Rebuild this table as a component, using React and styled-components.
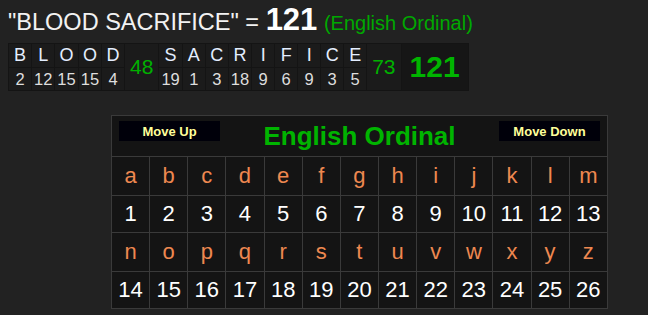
import React from 'react';
import styled, { createGlobalStyle } from 'styled-components';

const GlobalStyle = createGlobalStyle`
  html, body {
    margin: 0;
    background: #222222;
    font-family: "Liberation Sans", Arial, sans-serif;
  }
  body {
    padding: 8px;
  }
`;

const Headline = styled.div`
  font-size: 23.5px;
  line-height: 26px;
  color: #f2f2f2;
  white-space: nowrap;
  margin-top: -1px;
`;

const Total = styled.span`
  font-size: 31px;
  font-weight: bold;
  color: #ffffff;
`;

const Cipher = styled.span`
  font-size: 20px;
  color: #00a800;
`;

const Breakdown = styled.table`
  border-collapse: collapse;
  background: #141414;
  margin-top: 7px;
  border: 1px solid #161616;
`;

const LetterCell = styled.td`
  height: 23px;
  min-width: 18px;
  padding: 0 2px;
  text-align: center;
  font-size: 18px;
  color: #e4eeff;
  background: #1b1b1b;
  border: 1px solid #141414;
`;

const ValueCell = styled(LetterCell)`
  height: 22px;
  font-size: 16.5px;
  padding: 0 2px;
  color: #dedede;
`;

const WordSum = styled.td`
  padding: 0 5px;
  text-align: center;
  font-size: 21px;
  color: #00b000;
  background: #1b1b1b;
  border: 1px solid #141414;
`;

const GrandSum = styled.td`
  padding: 0 8px;
  text-align: center;
  font-size: 30px;
  font-weight: bold;
  color: #00b400;
  background: #161616;
  border: 1px solid #141414;
`;

const ChartWrap = styled.div`
  margin-top: 24px;
  padding-left: 103px;
`;

const Chart = styled.table`
  border-collapse: collapse;
  background: #141414;
  width: 497px;
  table-layout: fixed;
`;

const HeaderCell = styled.td`
  height: 40px;
  padding: 0 7px;
  border: 1px solid #3a3a3a;
  vertical-align: top;
`;

const HeaderBar = styled.div`
  display: flex;
  align-items: flex-start;
  justify-content: space-between;
  padding-top: 5px;
`;

const MoveButton = styled.button`
  width: 101px;
  height: 20px;
  padding: 0;
  border: 0;
  background: #00000a;
  color: #ffff99;
  font-family: "Liberation Sans", Arial, sans-serif;
  font-size: 13px;
  font-weight: bold;
`;

const Title = styled.div`
  font-size: 26px;
  font-weight: bold;
  color: #00b400;
  line-height: 30px;
`;

const ChartCell = styled.td`
  height: ${p => (p.$letter ? 38 : 36)}px;
  padding: 0;
  text-align: center;
  font-size: 22px;
  color: ${p => (p.$letter ? '#ee8850' : '#ffffff')};
  border: 1px solid #3a3a3a;
`;

const words = [
  ['B', 'L', 'O', 'O', 'D'],
  ['S', 'A', 'C', 'R', 'I', 'F', 'I', 'C', 'E'],
];

const ord = c => c.toLowerCase().charCodeAt(0) - 96;
const sum = w => w.reduce((s, c) => s + ord(c), 0);

const alphabet = 'abcdefghijklmnopqrstuvwxyz'.split('');
const halves = [alphabet.slice(0, 13), alphabet.slice(13)];

const App = () => (
  <>
    <GlobalStyle />
    <Headline>
      "BLOOD SACRIFICE" = <Total>121</Total> <Cipher>(English Ordinal)</Cipher>
    </Headline>
    <Breakdown>
      <tbody>
        <tr>
          {words.map((w, i) => (
            <React.Fragment key={i}>
              {w.map((c, j) => (
                <LetterCell key={j}>{c}</LetterCell>
              ))}
              <WordSum rowSpan={2}>{sum(w)}</WordSum>
            </React.Fragment>
          ))}
          <GrandSum rowSpan={2}>121</GrandSum>
        </tr>
        <tr>
          {words.map((w, i) =>
            w.map((c, j) => <ValueCell key={`${i}-${j}`}>{ord(c)}</ValueCell>)
          )}
        </tr>
      </tbody>
    </Breakdown>
    <ChartWrap>
      <Chart>
        <tbody>
          <tr>
            <HeaderCell colSpan={13}>
              <HeaderBar>
                <MoveButton>Move Up</MoveButton>
                <Title>English Ordinal</Title>
                <MoveButton>Move Down</MoveButton>
              </HeaderBar>
            </HeaderCell>
          </tr>
          {halves.map((row, i) => (
            <React.Fragment key={i}>
              <tr>
                {row.map(c => (
                  <ChartCell key={c} $letter>{c}</ChartCell>
                ))}
              </tr>
              <tr>
                {row.map(c => (
                  <ChartCell key={c}>{ord(c)}</ChartCell>
                ))}
              </tr>
            </React.Fragment>
          ))}
        </tbody>
      </Chart>
    </ChartWrap>
  </>
);

export default App;
